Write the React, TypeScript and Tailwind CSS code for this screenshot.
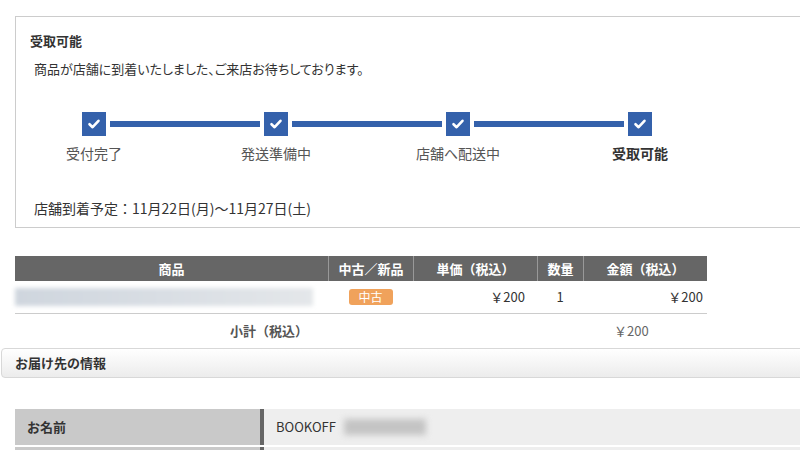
import React from 'react';

const steps = ['受付完了', '発送準備中', '店舗へ配送中', '受取可能'];

const CheckBox: React.FC = () => (
  <div className="w-[24px] h-[24px] bg-[#3461ab] flex items-center justify-center shrink-0">
    <svg width="14" height="14" viewBox="0 0 14 14">
      <polyline points="2.5,7.2 5.6,10.2 11.5,3.8" fill="none" stroke="#fff" strokeWidth="2.6" strokeLinecap="round" strokeLinejoin="round" />
    </svg>
  </div>
);

export default function App() {
  return (
    <div
      className="w-[800px] h-[450px] overflow-hidden bg-white text-[13px] text-[#333]"
      style={{ fontFamily: '"Noto Sans CJK JP", "Noto Sans", sans-serif' }}
    >
      {/* status box */}
      <div className="mt-[16px] ml-[15px] w-[820px] border border-[#cccccc] pt-[14px] pb-[9px]">
        <div className="pl-[14px] font-bold leading-[20px]">受取可能</div>
        <div className="pl-[18px] mt-[8px] leading-[20px] [font-feature-settings:'palt']">
          商品が店舗に到着いたしました、ご来店お待ちしております。
        </div>

        <div className="flex items-center mt-[33px] ml-[66px] gap-[4px]">
          {steps.map((s, i) => (
            <React.Fragment key={s}>
              <CheckBox />
              {i < steps.length - 1 && <div className="w-[150px] h-[6px] bg-[#3461ab]" />}
            </React.Fragment>
          ))}
        </div>
        <div className="flex mt-[7px] ml-[18px] gap-[62px]">
          {steps.map((s, i) => (
            <div
              key={s}
              className={`w-[120px] text-center text-[14px] leading-[20px] ${
                i === steps.length - 1 ? 'font-bold text-[#333]' : 'text-[#555]'
              }`}
            >
              {s}
            </div>
          ))}
        </div>

        <div className="pl-[18px] mt-[35px] text-[14px] leading-[20px]">店舗到着予定：11月22日(月)～11月27日(土)</div>
      </div>

      {/* order table */}
      <div className="mt-[28px] ml-[15px] w-[692px]">
        <div className="flex h-[25px] bg-[#666666] text-white font-bold leading-[25px]">
          <div className="w-[313px] text-center">商品</div>
          <div className="w-[85px] text-center border-l border-[#999]">中古／新品</div>
          <div className="w-[124px] text-center border-l border-[#999]">単価（税込）</div>
          <div className="w-[46px] text-center border-l border-[#999]">数量</div>
          <div className="w-[124px] text-center border-l border-[#999]">金額（税込）</div>
        </div>
        <div className="flex h-[33px] items-center border-b border-[#cccccc]">
          <div className="w-[313px] h-full flex items-center">
            <div className="w-[298px] h-[18px] bg-gradient-to-r from-[#cfd6de] via-[#d9dee4] to-[#e4e7ea] blur-[2px]" />
          </div>
          <div className="w-[85px] flex justify-center">
            <span className="w-[44px] h-[16px] rounded-[3px] bg-[#f0a25b] text-white text-[12px] leading-[16px] text-center">中古</span>
          </div>
          <div className="w-[124px] text-right pr-[12px]">￥200</div>
          <div className="w-[46px] text-center">1</div>
          <div className="w-[124px] text-right pr-[4px]">￥200</div>
        </div>
        <div className="flex h-[34px] items-center">
          <div className="w-[313px] text-right pr-[20px] font-bold text-[#555]">小計（税込）</div>
          <div className="w-[255px]" />
          <div className="w-[124px] pl-[31px] text-[#666]">￥200</div>
        </div>
      </div>

      {/* delivery info heading */}
      <div className="ml-[1px] w-[830px] h-[30px] flex items-center pl-[13px] border border-[#d8d8d8] rounded-[4px] bg-gradient-to-b from-white to-[#ececec] font-bold">
        お届け先の情報
      </div>

      <div className="mt-[31px] ml-[15px]">
        <div className="flex h-[36px]">
          <div className="w-[245px] bg-[#c9c9c9] flex items-center pl-[12px] font-bold">お名前</div>
          <div className="w-[4px] bg-[#666]" />
          <div className="flex-1 bg-[#eeeeee] flex items-center pl-[12px]">
            <span>BOOKOFF</span>
            <span className="ml-[8px] w-[82px] h-[16px] bg-[#c4c4c4] blur-[3px]" />
          </div>
        </div>
        <div className="flex h-[36px] mt-[2px]">
          <div className="w-[245px] bg-[#c9c9c9]" />
          <div className="w-[4px] bg-[#666]" />
          <div className="flex-1 bg-[#eeeeee]" />
        </div>
      </div>
    </div>
  );
}
